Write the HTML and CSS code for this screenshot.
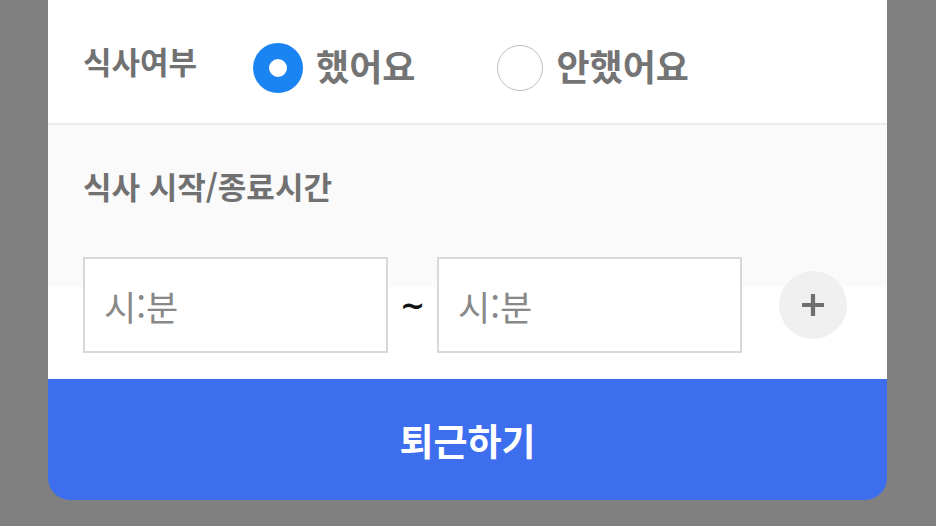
FILE: index.html
```html
<!DOCTYPE html>
<html lang="ko">
<head>
<meta charset="utf-8">
<link rel="stylesheet" href="styles.css">
</head>
<body>
<div class="card">
  <div class="meal-row">
    <span class="label">식사여부</span>
    <label class="radio">
      <span class="dot checked"></span>
      <span class="radio-text">했어요</span>
    </label>
    <label class="radio radio-second">
      <span class="dot"></span>
      <span class="radio-text">안했어요</span>
    </label>
  </div>
  <div class="time-section">
    <div class="label time-label">식사 시작/종료시간</div>
    <div class="time-row">
      <div class="time-input">시:분</div>
      <div class="tilde">~</div>
      <div class="time-input">시:분</div>
      <button class="plus" type="button">
        <svg width="26" height="26" viewBox="0 0 26 26"><path d="M13 2v22M2 13h22" stroke="#6f6f6f" stroke-width="4.2" fill="none"/></svg>
      </button>
    </div>
  </div>
  <button class="leave" type="button">퇴근하기</button>
</div>
</body>
</html>
```
FILE: styles.css
```css
html, body {
  margin: 0;
  padding: 0;
  background: #808080;
  font-family: "Noto Sans CJK KR", "Noto Sans", sans-serif;
}
.card {
  margin-left: 48px;
  width: 839px;
  display: flex;
  flex-direction: column;
}
.meal-row {
  height: 123px;
  background: #fff;
  display: flex;
  align-items: center;
  padding-left: 35px;
  border-bottom: 2px solid #ececec;
}
.label {
  font-size: 31px;
  font-weight: 700;
  color: #717171;
  line-height: 1;
}
.meal-row .label {
  margin-top: -2px;
}
.radio {
  display: flex;
  align-items: center;
  margin-left: 58px;
  margin-top: 12px;
}
.radio-second {
  margin-left: 82px;
}
.dot {
  width: 46px;
  height: 46px;
  border-radius: 50%;
  border: 1.5px solid #bdbdbd;
  box-sizing: border-box;
  background: #fff;
}
.dot.checked {
  width: 50px;
  height: 50px;
  border: 16px solid #1a84f2;
  margin-left: -2px;
}
.radio-text {
  margin-left: 13px;
  font-size: 36px;
  font-weight: 700;
  color: #747474;
  line-height: 1;
  margin-top: -6px;
}
.time-section {
  background: linear-gradient(#fafafa 0, #fafafa 162px, #fff 162px);
  padding: 45px 0 26px 35px;
}
.time-label {
  height: 30px;
}
.time-row {
  margin-top: 57px;
  display: flex;
  align-items: center;
}
.time-input {
  width: 305px;
  height: 96px;
  box-sizing: border-box;
  border: 2px solid #d8d8d8;
  background: #fff;
  padding-left: 19px;
  display: flex;
  align-items: center;
  font-size: 35px;
  color: #888;
  line-height: 1;
}
.tilde {
  width: 49px;
  text-align: center;
  font-size: 30px;
  font-weight: 700;
  color: #111;
  font-family: "DejaVu Sans", sans-serif;
}
.plus {
  margin-left: 37px;
  width: 68px;
  height: 68px;
  border-radius: 50%;
  border: none;
  background: #f0f0f0;
  padding: 0;
  display: flex;
  align-items: center;
  justify-content: center;
}
.leave {
  height: 121px;
  border: none;
  background: #3d6eee;
  color: #fff;
  font-family: "Noto Sans CJK KR", sans-serif;
  font-size: 37px;
  font-weight: 700;
  border-radius: 0 0 22px 22px;
  padding: 0;
}
```
